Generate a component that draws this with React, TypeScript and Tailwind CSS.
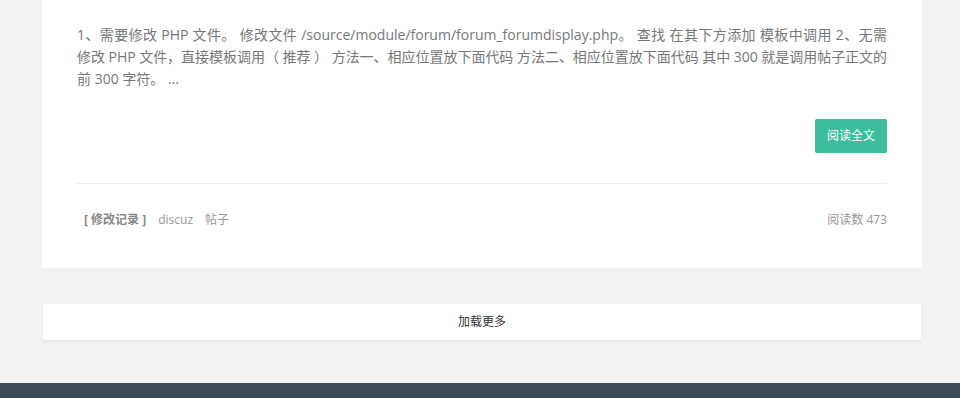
export default function App() {
    return (
        <div
            className="min-h-screen bg-[#f2f2f2] text-[14px] text-[#777]"
            style={{ fontFamily: '"Open Sans", "Noto Sans CJK SC", sans-serif' }}
        >
            <div className="ml-[42px] w-[880px]">
                <article className="bg-white px-[35px] pt-[24px] pb-[39px]">
                    {/* justified excerpt, lines broken where the original wraps */}
                    <p className="leading-[22px]">
                        <span className="block text-justify [text-align-last:justify]">
                            1、需要修改 PHP 文件。 修改文件 /source/module/forum/forum_forumdisplay.php。 查找 在其下方添加 模板中调用 2、无需
                        </span>
                        <span className="block text-justify tracking-[-0.06px] [text-align-last:justify]">
                            修改 PHP 文件，直接模板调用（ 推荐 ） 方法一、相应位置放下面代码 方法二、相应位置放下面代码 其中 300 就是调用帖子正文的
                        </span>
                        <span className="block">前 300 字符。 ...</span>
                    </p>
                    <div className="mt-[29px] flex justify-end">
                        <button className="h-[34px] w-[72px] rounded-[2px] bg-[#3dbd9b] text-[12px] text-white">
                            阅读全文
                        </button>
                    </div>
                    <div className="mt-[30px] border-t border-[#eeeeee]" />
                    <div className="mt-[27px] flex items-center justify-between text-[12px] text-[#999]">
                        <div className="flex items-center gap-[12px]">
                            <span className="pl-[7px] font-bold text-[#888]">[ 修改记录 ]</span>
                            <span>discuz</span>
                            <span>帖子</span>
                        </div>
                        <span>阅读数 473</span>
                    </div>
                </article>

                <div className="mx-[1px] mt-[36px] flex h-[36px] items-center justify-center bg-white text-[12px] text-[#333] shadow-[0_2px_3px_rgba(0,0,0,0.06)]">
                    加载更多
                </div>
            </div>

            <footer className="mt-[43px] h-[15px] bg-[#3d4b55]" />
        </div>
    );
}
